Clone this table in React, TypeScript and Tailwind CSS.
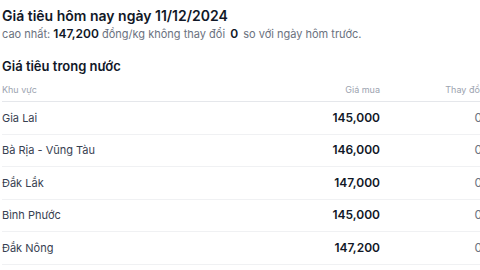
const rows = [
  { name: 'Gia Lai', price: '145,000', change: '0' },
  { name: 'Bà Rịa - Vũng Tàu', price: '146,000', change: '0' },
  { name: 'Đắk Lắk', price: '147,000', change: '0' },
  { name: 'Bình Phước', price: '145,000', change: '0' },
  { name: 'Đắk Nông', price: '147,200', change: '0' },
];

export default function App() {
  return (
    <div className="w-[480px] h-[270px] overflow-hidden bg-white font-['Inter',sans-serif]">
      <div className="w-[540px] pl-[2px] pt-[6px]">
        <h1 className="text-[14px] font-semibold leading-[20px] text-[#111827]">
          Giá tiêu hôm nay ngày 11/12/2024
        </h1>
        <p className="text-[11px] leading-[16px] text-[#6b7280]">
          cao nhất: <span className="text-[12px] font-semibold text-[#111827]">147,200</span> đồng/kg không thay đổi{' '}
          <span className="text-[12px] font-semibold text-[#111827] mx-[2px]">0</span> so với ngày hôm trước.
        </p>

        <h2 className="text-[13px] font-semibold leading-[18px] text-[#111827] mt-[15px]">
          Giá tiêu trong nước
        </h2>

        <div className="mt-[9px]">
          <div className="flex h-[18px] items-start border-b border-[#e5e7eb] text-[9px] leading-[12px] text-[#9ca3af]">
            <div className="w-[258px]">Khu vực</div>
            <div className="w-[120px] text-right">Giá mua</div>
            <div className="w-[102px] text-right">Thay đổi</div>
          </div>
          {rows.map((r) => (
            <div
              key={r.name}
              className="flex h-[32.5px] items-center border-b border-[#f0f1f3] text-[11px] leading-[16px]"
            >
              <div className="w-[258px] text-[#374151]">{r.name}</div>
              <div className="w-[120px] text-right text-[12px] font-semibold text-[#111827]">{r.price}</div>
              <div className="w-[102px] text-right text-[12px] text-[#6b7280]">{r.change}</div>
            </div>
          ))}
        </div>
      </div>
    </div>
  );
}
